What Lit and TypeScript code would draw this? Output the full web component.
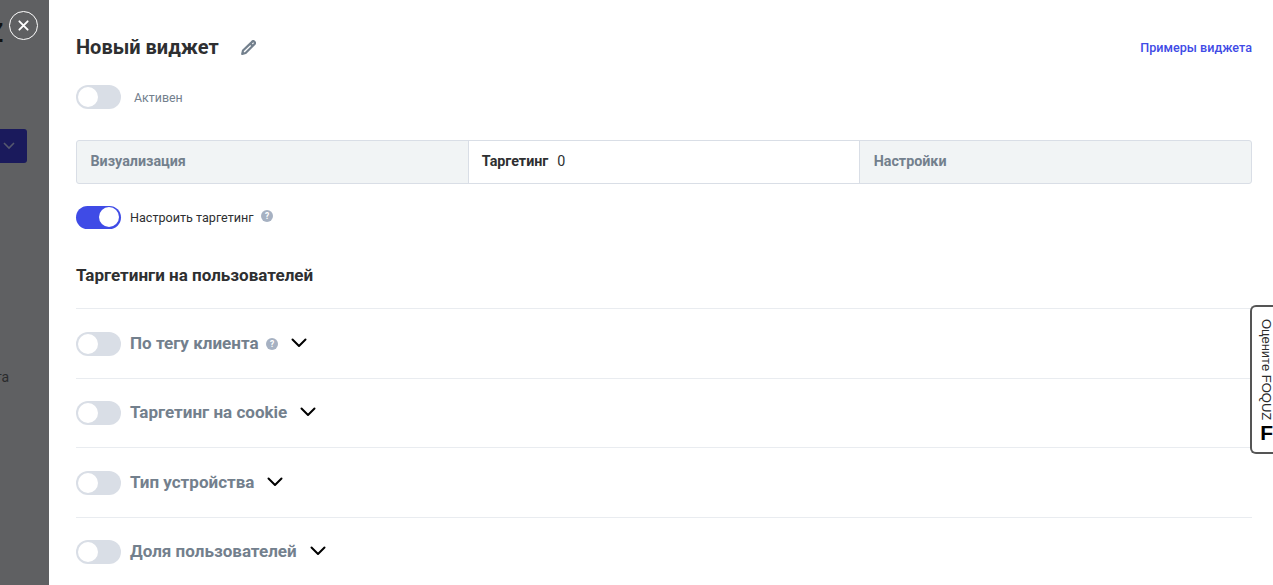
import { LitElement, html, css } from "lit";
import { customElement } from "lit/decorators.js";

const chevron = html`<svg class="chev" width="16" height="10" viewBox="0 0 16 10" fill="none"><path d="M1.5 1.5 8 8l6.5-6.5" stroke="#000" stroke-width="2" stroke-linecap="round" stroke-linejoin="round"/></svg>`;
const help = html`<svg class="help" width="12" height="12" viewBox="0 0 12 12"><circle cx="6" cy="6" r="6" fill="#a6b1c2"/><text x="6" y="9" text-anchor="middle" font-size="8.5" font-weight="700" font-family="Roboto, sans-serif" fill="#fff">?</text></svg>`;

@customElement("app-root")
export class AppRoot extends LitElement {
  static styles = css`
    :host { display: block; width: 1273px; height: 585px; overflow: hidden; font-family: Roboto, "Liberation Sans", sans-serif; background: #fff; }
    .page { display: flex; height: 585px; position: relative; }
    .backdrop { width: 49px; flex: none; background: #5f6062; position: relative; overflow: hidden; display: flex; flex-direction: column; }
    .colon { margin: 20px 0 0 -12px; height: 28px; font-size: 25px; line-height: 28px; font-weight: 700; color: #111; }
    .dark-btn { margin: 81px 0 0 -20px; width: 47px; height: 34px; border-radius: 3px; background: #1a1a5c; display: flex; align-items: center; justify-content: flex-end; padding-right: 12px; box-sizing: border-box; flex: none; }
    .frag { margin: 206px 0 0 -5px; font-size: 14px; line-height: 16px; color: #2a2b2d; }
    .close { position: absolute; left: 9px; top: 11px; width: 29px; height: 29px; box-sizing: border-box; border: 1px solid #fff; border-radius: 50%; display: flex; align-items: center; justify-content: center; }
    .panel { flex: 1; min-width: 0; padding: 0 21px 0 27px; display: flex; flex-direction: column; color: #2e2f31; overflow: hidden; }
    .panel > * { flex: none; }
    .head { display: flex; align-items: center; height: 24px; margin-top: 35px; }
    .title { font-size: 20px; font-weight: 700; line-height: 24px; color: #2e2f31; }
    .pencil { margin-left: 22px; }
    .link { margin-left: auto; font-size: 12.6px; font-weight: 500; color: #3f4be6; }
    .switch { width: 45px; height: 24px; border-radius: 12px; background: #d9dee6; box-sizing: border-box; padding: 2px; flex: none; display: flex; }
    .switch i { display: block; width: 20px; height: 20px; border-radius: 50%; background: #fff; }
    .switch.on { background: #3f4be6; justify-content: flex-end; height: 23px; padding: 1.5px 2px; }
    .active { display: flex; align-items: center; margin-top: 26px; height: 24px; gap: 13px; font-size: 12.4px; color: #73808d; }
    .tabs { display: flex; margin-top: 31px; height: 44px; box-sizing: border-box; border: 1px solid #d9dee6; border-radius: 3px; background: #f1f4f5; }
    .tab { flex: 1; display: flex; align-items: center; gap: 9px; padding-left: 13.5px; font-size: 14.3px; font-weight: 700; color: #73808d; padding-bottom: 3px; }
    .tab.sel { background: #fff; color: #2e2f31; border-left: 1px solid #d9dee6; border-right: 1px solid #d9dee6; padding-left: 13px; }
    .count { font-weight: 400; color: #2e2f31; }
    .tune { display: flex; align-items: center; margin-top: 21px; height: 24px; font-size: 12.6px; color: #2e2f31; }
    .tune span { margin-left: 9px; }
    .tune .help { margin-left: 7px; position: relative; top: -1px; }
    h2 { margin: 34px 0 21.4px; font-size: 17.05px; line-height: 24px; font-weight: 700; color: #2e2f31; }
    .row { border-top: 1px solid #e9ecf0; height: 69.5px; box-sizing: border-box; display: flex; align-items: center; font-size: 17.05px; font-weight: 700; color: #73808d; }
    .row .lbl { margin-left: 9px; position: relative; top: -1px; }
    .row .help { margin-left: 7px; }
    .row .chev { margin-left: 13px; position: relative; top: -1px; }
    .rate { position: absolute; right: 0; top: 305px; width: 23px; height: 149px; box-sizing: border-box; background: #fff; border: 2px solid #555; border-right: none; border-radius: 6px 0 0 6px; overflow: hidden; }
    .rate-in { display: flex; flex-direction: column; align-items: flex-end; padding: 12px 0 0 0; }
    .rate span { writing-mode: vertical-rl; font-family: "Liberation Sans", Arial, sans-serif; font-size: 13px; color: #2b2b2b; line-height: 1; }
    .rate b { font-family: "Liberation Sans", Arial, sans-serif; font-size: 21px; font-weight: 700; color: #000; line-height: 20px; margin: 3px 0 0 0; }
  `;

  private row(label: string, withHelp = false) {
    return html`<div class="row"><div class="switch"><i></i></div><span class="lbl">${label}</span>${withHelp ? help : ""}${chevron}</div>`;
  }

  render() {
    return html`<div class="page">
      <div class="backdrop">
        <div class="colon">Z</div>
        <div class="dark-btn"><svg width="12" height="8" viewBox="0 0 12 8" fill="none"><path d="M1 1l5 5 5-5" stroke="#55586e" stroke-width="1.6"/></svg></div>
        <div class="frag">та</div>
        <div class="close"><svg width="11" height="11" viewBox="0 0 12 12" fill="none"><path d="M1.5 1.5l9 9M10.5 1.5l-9 9" stroke="#fff" stroke-width="2.1" stroke-linecap="round"/></svg></div>
      </div>
      <div class="panel">
        <div class="head">
          <div class="title">Новый виджет</div>
          <svg class="pencil" width="15" height="15" viewBox="0 0 15 15" fill="none"><path d="M10.3 2.6 11.5 1.4a1 1 0 0 1 1.4 0l.9.9a1 1 0 0 1 0 1.4L12.6 5 4.6 13l-3.4.9.8-3.4zM9.3 3.5l2.4 2.4" stroke="#73808d" stroke-width="2.2" stroke-linejoin="round"/></svg>
          <div class="link">Примеры виджета</div>
        </div>
        <div class="active"><div class="switch"><i></i></div><span>Активен</span></div>
        <div class="tabs">
          <div class="tab">Визуализация</div>
          <div class="tab sel">Таргетинг <span class="count">0</span></div>
          <div class="tab">Настройки</div>
        </div>
        <div class="tune"><div class="switch on"><i></i></div><span>Настроить таргетинг</span>${help}</div>
        <h2>Таргетинги на пользователей</h2>
        ${this.row("По тегу клиента", true)}
        ${this.row("Таргетинг на cookie")}
        ${this.row("Тип устройства")}
        ${this.row("Доля пользователей")}
      </div>
      <div class="rate"><div class="rate-in"><span>Оцените FOQUZ</span><b>F</b></div></div>
    </div>`;
  }
}
